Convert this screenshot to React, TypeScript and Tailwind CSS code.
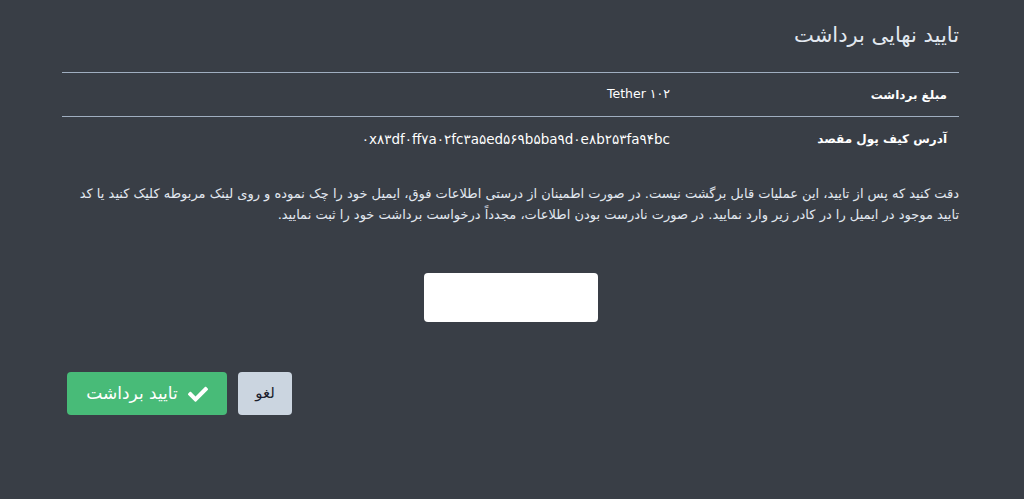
import React from 'react';

const font = { fontFamily: '"DejaVu Sans", "Noto Sans", sans-serif' };

function CheckIcon() {
  return (
    <svg width="20" height="16" viewBox="0 0 512 400" fill="white" aria-hidden>
      <path d="M173.9 389.4L7.5 223c-10-10-10-26.2 0-36.2l36.2-36.2c10-10 26.2-10 36.2 0L192 262.7 432.1 22.6c10-10 26.2-10 36.2 0l36.2 36.2c10 10 10 26.2 0 36.2L210.1 389.4c-10 10-26.2 10-36.2 0z" />
    </svg>
  );
}

export default function App() {
  return (
    <div dir="rtl" style={font} className="w-[1024px] h-[499px] bg-[#393e46] text-[#e5e7eb] pr-[65px] pl-[62px] pt-[21px]">
      <h1 className="text-[21px] leading-[28px] text-[#e2e8f0] mb-[23px]">تایید نهایی برداشت</h1>

      <div className="border-t border-[#a0aec0]">
        <div className="flex h-[44px] items-center border-b border-[#a0aec0]">
          <div className="w-[289px] pr-[12px] text-[12px] font-bold text-white">مبلغ برداشت</div>
          <div className="text-[12.5px] text-white">۱۰۲ Tether</div>
        </div>
        <div className="flex h-[44px] items-center">
          <div className="w-[289px] pr-[12px] text-[12px] font-bold text-white">آدرس کیف پول مقصد</div>
          <div className="text-[13.5px] text-white">
            <span dir="ltr">۰x۸۳df۰ff۷a۰۲fc۳a۵ed۵۶۹b۵ba۹d۰e۸b۲۵۳fa۹۴bc</span>
          </div>
        </div>
      </div>

      <p className="mt-[22px] text-[13px] leading-[21px] text-[#e2e8f0]">
        دقت کنید که پس از تایید، این عملیات قابل برگشت نیست. در صورت اطمینان از درستی اطلاعات فوق، ایمیل خود را چک نموده و روی لینک مربوطه کلیک کنید یا کد تایید موجود در ایمیل را در کادر زیر وارد نمایید. در صورت نادرست بودن اطلاعات، مجدداً درخواست برداشت خود را ثبت نمایید.
      </p>

      <div className="flex justify-center mt-[48px]">
        <input className="w-[174px] h-[49px] rounded-[4px] bg-white outline-none" />
      </div>

      <div className="flex gap-[11px] mt-[50px] justify-end pl-[5px]">
        <button className="h-[43px] w-[54px] rounded-[4px] bg-[#cbd5e0] text-[#1a202c] text-[15px]">لغو</button>
        <button className="h-[43px] w-[160px] rounded-[4px] bg-[#48bb78] text-white text-[17px] flex items-center justify-center gap-[10px]">
          <CheckIcon />
          <span>تایید برداشت</span>
        </button>
      </div>
    </div>
  );
}
